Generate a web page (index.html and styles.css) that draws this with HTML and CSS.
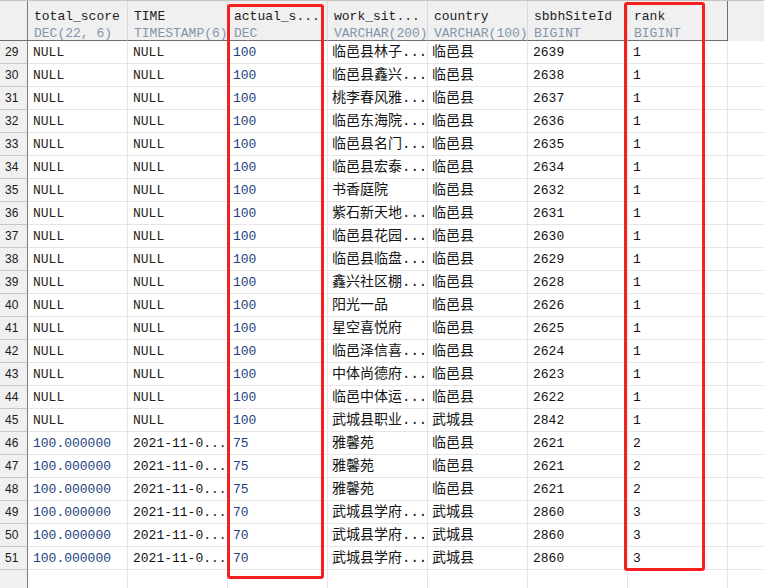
FILE: index.html
```html
<!DOCTYPE html>
<html>
<head>
<meta charset="utf-8">
<link rel="stylesheet" href="styles.css">
</head>
<body>
<div class="grid">
  <div class="row head">
    <div class="rn"></div>
    <div class="hc"><div class="name">total_score</div><div class="type">DEC(22, 6)</div></div>
    <div class="hc"><div class="name">TIME</div><div class="type">TIMESTAMP(6)</div></div>
    <div class="hc"><div class="name">actual_s...</div><div class="type">DEC</div></div>
    <div class="hc"><div class="name">work_sit...</div><div class="type">VARCHAR(200)</div></div>
    <div class="hc"><div class="name">country</div><div class="type">VARCHAR(100)</div></div>
    <div class="hc"><div class="name">sbbhSiteId</div><div class="type">BIGINT</div></div>
    <div class="hc last"><div class="name">rank</div><div class="type">BIGINT</div></div>
    <div class="hfill"></div>
  </div>
  <div id="rows"></div>
  <div class="row blank">
    <div class="rn"></div>
    <div class="c"></div><div class="c"></div><div class="c"></div><div class="c"></div><div class="c"></div><div class="c"></div><div class="c"></div>
    <div class="fill"></div>
  </div>
</div>
<div class="mark mark-a"></div>
<div class="mark mark-b"></div>
<script src="script.js"></script>
</body>
</html>
```
FILE: script.js
```js
const data = [
  [29, null, null, "100", "临邑县林子...", "临邑县", "2639", "1"],
  [30, null, null, "100", "临邑县鑫兴...", "临邑县", "2638", "1"],
  [31, null, null, "100", "桃李春风雅...", "临邑县", "2637", "1"],
  [32, null, null, "100", "临邑东海院...", "临邑县", "2636", "1"],
  [33, null, null, "100", "临邑县名门...", "临邑县", "2635", "1"],
  [34, null, null, "100", "临邑县宏泰...", "临邑县", "2634", "1"],
  [35, null, null, "100", "书香庭院", "临邑县", "2632", "1"],
  [36, null, null, "100", "紫石新天地...", "临邑县", "2631", "1"],
  [37, null, null, "100", "临邑县花园...", "临邑县", "2630", "1"],
  [38, null, null, "100", "临邑县临盘...", "临邑县", "2629", "1"],
  [39, null, null, "100", "鑫兴社区棚...", "临邑县", "2628", "1"],
  [40, null, null, "100", "阳光一品", "临邑县", "2626", "1"],
  [41, null, null, "100", "星空喜悦府", "临邑县", "2625", "1"],
  [42, null, null, "100", "临邑泽信喜...", "临邑县", "2624", "1"],
  [43, null, null, "100", "中体尚德府...", "临邑县", "2623", "1"],
  [44, null, null, "100", "临邑中体运...", "临邑县", "2622", "1"],
  [45, null, null, "100", "武城县职业...", "武城县", "2842", "1"],
  [46, "100.000000", "2021-11-0...", "75", "雅馨苑", "临邑县", "2621", "2"],
  [47, "100.000000", "2021-11-0...", "75", "雅馨苑", "临邑县", "2621", "2"],
  [48, "100.000000", "2021-11-0...", "75", "雅馨苑", "临邑县", "2621", "2"],
  [49, "100.000000", "2021-11-0...", "70", "武城县学府...", "武城县", "2860", "3"],
  [50, "100.000000", "2021-11-0...", "70", "武城县学府...", "武城县", "2860", "3"],
  [51, "100.000000", "2021-11-0...", "70", "武城县学府...", "武城县", "2860", "3"]
];
const kinds = ["dec", "txt", "dec", "cjk", "cjk", "txt", "txt"];
const host = document.getElementById("rows");
for (const r of data) {
  const row = document.createElement("div");
  row.className = "row body";
  const rn = document.createElement("div");
  rn.className = "rn";
  rn.textContent = r[0];
  row.appendChild(rn);
  for (let i = 1; i <= 7; i++) {
    const c = document.createElement("div");
    const v = r[i];
    c.className = "c " + (v === null ? "null" : kinds[i - 1]);
    c.textContent = v === null ? "NULL" : v;
    row.appendChild(c);
  }
  const f = document.createElement("div");
  f.className = "fill";
  row.appendChild(f);
  host.appendChild(row);
}
```
FILE: styles.css
```css
html, body {
  margin: 0;
  padding: 0;
  background: #ffffff;
}
body {
  width: 764px;
  height: 588px;
  overflow: hidden;
  position: relative;
  font-family: "Liberation Mono", "Noto Sans CJK SC", monospace;
  font-size: 13px;
}
.grid {
  display: flex;
  flex-direction: column;
  border-top: 1px solid #c4c4c4;
}
.row {
  display: flex;
}
.head {
  height: 40px;
  background: #f0f0f0;
}
.head .rn {
  border-bottom: 1px solid #6e6e6e;
}
.rn {
  box-sizing: border-box;
  width: 28px;
  flex: none;
  background: #f0f0f0;
  border-right: 1px solid #7a7a7a;
  font-family: "Liberation Sans", Arial, sans-serif;
  font-size: 12px;
  color: #1a1a1a;
  padding-left: 5px;
}
.hc {
  box-sizing: border-box;
  width: 100px;
  flex: none;
  border-right: 1px solid #d9d9d9;
  border-bottom: 1px solid #6e6e6e;
  padding: 7px 0 0 6px;
  line-height: 17px;
  white-space: nowrap;
  overflow: hidden;
}
.hc.last {
  border-right-color: #6e6e6e;
}
.name {
  color: #1c1c1c;
}
.type {
  color: #8395ab;
}
.hfill {
  flex: 1;
  background: #f0f0f0;
}
.body {
  height: 23px;
}
.body .rn {
  border-bottom: 1px solid #c6c6c6;
  padding-top: 1px;
  line-height: 21px;
}
.c {
  box-sizing: border-box;
  width: 100px;
  flex: none;
  border-right: 1px solid #e6e6e6;
  border-bottom: 1px solid #e6e6e6;
  padding-left: 5px;
  padding-top: 1px;
  line-height: 21px;
  white-space: nowrap;
  overflow: hidden;
  color: #111111;
}
.c.null {
  color: #2b2416;
}
.c.dec {
  color: #22427e;
}
.c.cjk {
  font-size: 14px;
  padding-left: 4px;
  color: #141414;
}
.fill {
  flex: 1;
  border-bottom: 1px solid #e6e6e6;
}
.blank {
  height: 18px;
  border-bottom: 1px solid #a8a8a8;
}
.blank .c,
.blank .fill {
  border-bottom: none;
}
.mark {
  position: absolute;
  box-sizing: border-box;
  border: 3px solid #f42020;
  border-radius: 3px;
}
.mark-a {
  left: 227px;
  top: 4px;
  width: 97px;
  height: 575px;
}
.mark-b {
  left: 624px;
  top: 2px;
  width: 81px;
  height: 569px;
}
```
